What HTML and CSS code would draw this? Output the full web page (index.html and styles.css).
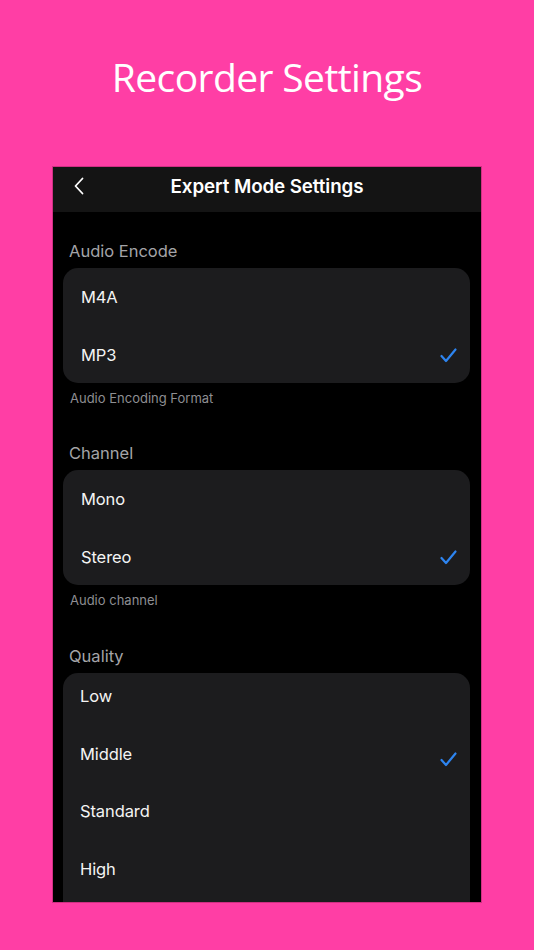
FILE: index.html
```html
<!DOCTYPE html>
<html lang="en">
<head>
<meta charset="UTF-8">
<meta name="viewport" content="width=device-width, initial-scale=1.0">
<title>Recorder Settings</title>
<link rel="stylesheet" href="styles.css">
</head>
<body>
<div class="page">
    <h1 class="headline">Recorder Settings</h1>

    <div class="phone">
        <div class="navbar">
            <svg class="back" width="12" height="18" viewBox="0 0 12 18">
                <path d="M9.5,1.5 L2.5,9 L9.5,16.5" fill="none" stroke="#fff" stroke-width="1.8" stroke-linecap="round" stroke-linejoin="round"/>
            </svg>
            <div class="nav-title">Expert Mode Settings</div>
        </div>

        <div class="content">
            <!-- Audio Encode -->
            <div class="group-label">Audio Encode</div>
            <div class="card">
                <div class="row">M4A</div>
                <div class="row">MP3
                    <svg class="check" width="17" height="15" viewBox="0 0 17 15"><path d="M1.5,8 L6,13 L15.5,1.5" fill="none" stroke="#2d84f0" stroke-width="2.2" stroke-linecap="round" stroke-linejoin="round"/></svg>
                </div>
            </div>
            <div class="group-note">Audio Encoding Format</div>

            <!-- Channel -->
            <div class="group-label">Channel</div>
            <div class="card">
                <div class="row">Mono</div>
                <div class="row">Stereo
                    <svg class="check" width="17" height="15" viewBox="0 0 17 15"><path d="M1.5,8 L6,13 L15.5,1.5" fill="none" stroke="#2d84f0" stroke-width="2.2" stroke-linecap="round" stroke-linejoin="round"/></svg>
                </div>
            </div>
            <div class="group-note">Audio channel</div>

            <!-- Quality -->
            <div class="group-label group-label-last">Quality</div>
            <div class="card card-open">
                <div class="row row-tight">Low</div>
                <div class="row row-tight">Middle
                    <svg class="check check-low" width="17" height="15" viewBox="0 0 17 15"><path d="M1.5,8 L6,13 L15.5,1.5" fill="none" stroke="#2d84f0" stroke-width="2.2" stroke-linecap="round" stroke-linejoin="round"/></svg>
                </div>
                <div class="row row-tight">Standard</div>
                <div class="row row-tight">High</div>
            </div>
        </div>
    </div>
</div>
</body>
</html>
```

FILE: styles.css
```css
body {
    margin: 0;
    padding: 0;
    background-color: #ff3ea5;
    font-family: Inter, 'Noto Sans', sans-serif;
    color: white;
}
.page {
    width: 534px;
    height: 950px;
    overflow: hidden;
    display: flex;
    flex-direction: column;
    align-items: center;
}
.headline {
    margin: 52px 0 0;
    height: 115px;
    font-family: 'Open Sans', sans-serif;
    font-weight: 400;
    font-size: 39px;
    letter-spacing: -0.6px;
    line-height: 50px;
    color: #fff;
}
.phone {
    width: 428px;
    height: 735px;
    background: #000;
    overflow: hidden;
    box-shadow: 0 0 0 1px rgba(120,20,70,0.35);
}
.navbar {
    height: 45px;
    background: #141414;
    display: flex;
    align-items: center;
    justify-content: center;
    position: relative;
}
.back {
    position: absolute;
    left: 20px;
    top: 10px;
}
.nav-title {
    font-size: 18.8px;
    font-weight: 600;
    letter-spacing: -0.1px;
    padding-bottom: 6px;
}
.content {
    padding: 0 11px 0 10px;
}
.group-label {
    color: #a4a4a8;
    font-size: 16.5px;
    padding: 28px 0 0 6px;
    height: 28px;
    line-height: 22px;
}
.group-label-last {
    padding-top: 29px;
}
.card {
    background: #1c1c1e;
    border-radius: 15px;
    overflow: hidden;
}
.card-open {
    border-radius: 15px 15px 0 0;
    padding-bottom: 60px;
}
.row {
    height: 57px;
    display: flex;
    align-items: center;
    justify-content: space-between;
    padding: 0 13px 0 18px;
    font-size: 16.5px;
    letter-spacing: -0.1px;
    color: #f4f4f4;
}
.row:first-child {
    height: 58px;
}
.row-tight {
    padding-left: 17px;
}
.card-open .row {
    height: 57.5px;
}
.card-open .row:first-child {
    height: 52px;
    padding-bottom: 6px;
    box-sizing: border-box;
}
.check {
    margin-top: 2px;
}
.check-low {
    margin-top: 11px;
}
.group-note {
    color: #8e8e92;
    font-size: 13px;
    padding: 7px 0 0 7px;
    height: 24px;
}
```
